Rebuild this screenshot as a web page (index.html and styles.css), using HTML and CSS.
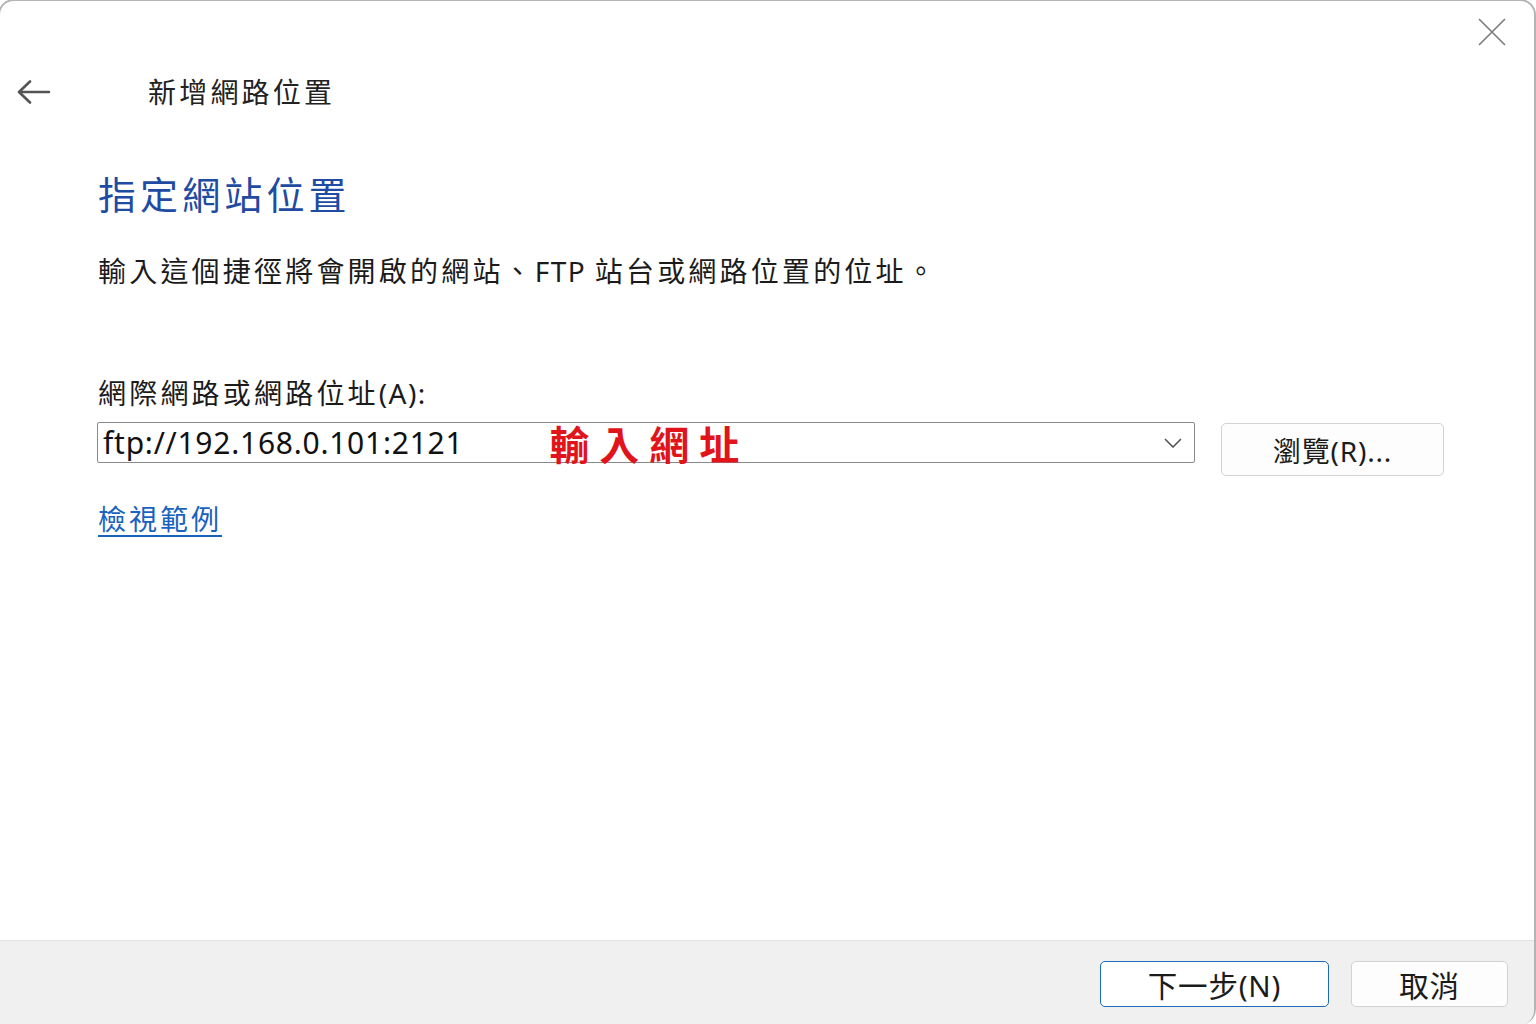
FILE: index.html
```html
<!DOCTYPE html>
<html lang="zh-Hant">
<head>
<meta charset="utf-8">
<title>新增網路位置</title>
<link rel="stylesheet" href="styles.css">
</head>
<body>
<div class="window">
  <div class="titlebar">
    <svg class="close" width="28" height="28" viewBox="0 0 28 28"><path d="M1 1 L27 27 M27 1 L1 27" stroke="#7a7a7a" stroke-width="1.6" fill="none"/></svg>
  </div>
  <div class="header">
    <svg class="back" width="34" height="24" viewBox="0 0 34 24"><path d="M2 12 H32 M13 1.5 L2 12 L13 22.5" stroke="#555" stroke-width="2.6" fill="none" stroke-linecap="round" stroke-linejoin="round"/></svg>
    <span class="wintitle">新增網路位置</span>
  </div>
  <div class="content">
    <h1 class="heading">指定網站位置</h1>
    <p class="desc">輸入這個捷徑將會開啟的網站、<span class="lat">FTP </span>站台或網路位置的位址。</p>
    <label class="label">網際網路或網路位址<span class="lat">(A):</span></label>
    <div class="inputrow">
      <div class="combo">
        <span class="value">ftp://192.168.0.101:2121</span>
        <span class="note">輸入網址</span>
        <svg class="chev" width="18" height="10" viewBox="0 0 18 10"><path d="M1 1 L9 9 L17 1" stroke="#555" stroke-width="1.6" fill="none"/></svg>
      </div>
      <button class="btn browse">瀏覽(R)...</button>
    </div>
    <a class="link" href="#">檢視範例</a>
  </div>
  <div class="footer">
    <button class="btn primary">下一步(N)</button>
    <button class="btn cancel">取消</button>
  </div>
</div>
</body>
</html>
```

FILE: styles.css
```css
html, body {
  margin: 0;
  padding: 0;
  background: #ffffff;
  width: 1536px;
  height: 1024px;
  overflow: hidden;
}
body {
  font-family: "Noto Sans", "Noto Sans CJK TC", sans-serif;
  color: #1b1b1b;
}
.window {
  box-sizing: border-box;
  width: 1538px;
  height: 1026px;
  margin-left: -2px;
  margin-top: -1px;
  border: 2px solid #b4b4b4;
  border-bottom: none;
  border-radius: 16px 16px 16px 0;
  background: #ffffff;
  display: flex;
  flex-direction: column;
  overflow: hidden;
}
.titlebar {
  height: 61px;
  display: flex;
  justify-content: flex-end;
  align-items: flex-start;
  padding-right: 28px;
  box-sizing: border-box;
  padding-top: 17px;
}
.header {
  height: 60px;
  display: flex;
  align-items: center;
  padding-left: 17px;
}
.back {
  display: block;
}
.wintitle {
  margin-left: 97px;
  font-family: "Noto Sans CJK TC", sans-serif;
  font-size: 28px;
  line-height: 40px;
  letter-spacing: 3.2px;
  color: #222;
  margin-top: -3px;
}
.content {
  flex: 1;
  padding-left: 97px;
  display: flex;
  flex-direction: column;
  align-items: flex-start;
}
.heading {
  margin: 46px 0 0 1px;
  font-family: "Noto Sans CJK TC", sans-serif;
  font-weight: 400;
  font-size: 38px;
  line-height: 50px;
  letter-spacing: 4.1px;
  color: #1f4ba3;
}
.desc {
  margin: 35px 0 0 1px;
  font-size: 28px;
  line-height: 36px;
  letter-spacing: 3.2px;
  color: #1b1b1b;
}
.label {
  margin: 86px 0 0 1px;
  font-size: 28px;
  line-height: 36px;
  letter-spacing: 3.2px;
  color: #1b1b1b;
}
.lat {
  letter-spacing: 1.4px;
}
.inputrow {
  margin-top: 11px;
  display: flex;
  align-items: flex-start;
}
.combo {
  box-sizing: border-box;
  width: 1098px;
  height: 41px;
  border: 1.5px solid #8a8a8a;
  border-radius: 2px;
  display: flex;
  align-items: center;
  padding-left: 5px;
  padding-right: 12px;
}
.value {
  font-size: 30px;
  letter-spacing: 0.75px;
  color: #111;
}
.note {
  margin-left: 86px;
  font-family: "Noto Sans CJK TC", sans-serif;
  font-weight: 700;
  font-size: 40px;
  letter-spacing: 10px;
  color: #e1141b;
}
.chev {
  margin-left: auto;
}
.btn {
  box-sizing: border-box;
  font-family: "Noto Sans", "Noto Sans CJK TC", sans-serif;
  font-size: 28px;
  color: #1b1b1b;
  background: #fdfdfd;
  border: 1px solid #d2d2d2;
  border-radius: 5px;
  letter-spacing: 0.8px;
  padding: 0;
}
.browse {
  margin-left: 26px;
  margin-top: 1px;
  width: 223px;
  height: 53px;
}
.link {
  margin: 24px 0 0 1px;
  font-family: "Noto Sans CJK TC", sans-serif;
  font-size: 28px;
  line-height: 36px;
  letter-spacing: 3px;
  color: #1a62c0;
  text-decoration: underline;
  text-underline-offset: 5px;
  text-decoration-thickness: 1.5px;
}
.footer {
  height: 85px;
  box-sizing: border-box;
  border-top: 1.5px solid #e0e0e0;
  background: #f0f0f0;
  display: flex;
  justify-content: flex-end;
  align-items: flex-start;
  padding-top: 20px;
  padding-right: 26px;
  gap: 22px;
}
.primary {
  width: 229px;
  height: 46px;
  border: 1.5px solid #1b6ab8;
  background: #ffffff;
  font-size: 29.5px;
}
.cancel {
  width: 157px;
  height: 46px;
  background: #fdfdfd;
  font-size: 29.5px;
}
```
